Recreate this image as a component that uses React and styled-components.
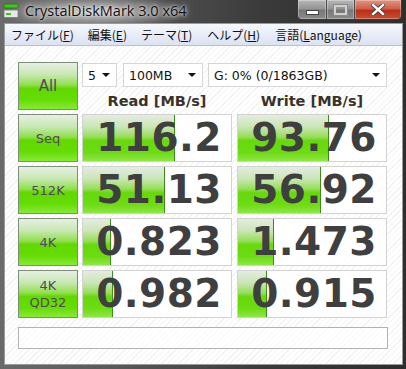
import React from "react"
import styled, { createGlobalStyle } from "styled-components"

const GlobalStyle = createGlobalStyle`
  html, body {
    margin: 0;
    padding: 0;
    background: #2e2e2e;
  }
  body {
    font-family: "DejaVu Sans", "Liberation Sans", sans-serif;
  }
`

const Window = styled.div`
  width: 406px;
  height: 369px;
  box-sizing: border-box;
  display: flex;
  flex-direction: column;
  background: linear-gradient(90deg, #6a6a6a 0%, #585858 30%, #3a3a3a 65%, #2e2e2e 100%);
  padding: 0 3px 4px 4px;
`

const TitleBar = styled.div`
  height: 23px;
  display: flex;
  align-items: flex-start;
  margin-left: -4px;
  margin-right: -3px;
  padding-left: 3px;
  background: radial-gradient(ellipse 95px 18px at 95px 12px, rgba(230, 230, 230, 0.75), rgba(180, 180, 180, 0) 100%);
`

const AppIcon = styled.svg`
  width: 16px;
  height: 16px;
  margin-top: 3px;
  flex: none;
`

const Title = styled.div`
  margin-left: 6px;
  margin-top: 1px;
  font-family: "Open Sans", "Noto Sans", sans-serif;
  font-size: 14.5px;
  line-height: 20px;
  color: #101010;
  text-shadow: 0 0 6px rgba(255, 255, 255, 0.9), 0 0 3px rgba(255, 255, 255, 0.8);
  flex: 1;
`

const Controls = styled.div`
  display: flex;
  height: 19px;
  margin-right: 4px;
  border: 1px solid #3a3a3a;
  border-top: none;
  border-radius: 0 0 5px 5px;
  overflow: hidden;
`

const CtrlButton = styled.div`
  width: ${(p) => p.$w}px;
  height: 100%;
  display: flex;
  align-items: center;
  justify-content: center;
  border-left: ${(p) => (p.$first ? "none" : "1px solid #4a4a4a")};
  background: ${(p) =>
    p.$close
      ? "linear-gradient(180deg, #e09484 0%, #d0604a 45%, #b8301a 55%, #c85030 100%)"
      : "linear-gradient(180deg, #b8b8b8 0%, #959595 45%, #777 55%, #8c8c8c 100%)"};
  box-shadow: inset 0 0 0 1px rgba(255, 255, 255, 0.3);
`

const MinGlyph = styled.div`
  width: 11px;
  height: 3px;
  margin-top: 6px;
  background: #fff;
  border: 1px solid #444;
`

const MaxGlyph = styled.div`
  width: 9px;
  height: 6px;
  border: 2px solid #d0d0d0;
  outline: 1px solid #8a8a8a;
`

const Client = styled.div`
  flex: 1;
  display: flex;
  flex-direction: column;
  background: #fff;
  border: 1px solid #9a9a9a;
`

const MenuBar = styled.div`
  height: 21px;
  display: flex;
  align-items: center;
  gap: 0;
  padding-left: 6px;
  background: linear-gradient(180deg, #f6f8fc 0%, #e8edf7 50%, #dbe2f1 100%);
  border-bottom: 1px solid #b8c0d4;
`

const MenuItem = styled.div`
  font-family: "Noto Sans CJK JP", sans-serif;
  font-size: 12px;
  line-height: 20px;
  color: #111;
  margin-right: ${(p) => p.$mr}px;
  u {
    text-decoration: underline;
    text-underline-offset: 1px;
  }
`

const Body = styled.div`
  flex: 1;
  background: repeating-linear-gradient(135deg, #ffffff 0 3px, #f2f2f2 3px 4px);
  padding: 16px 0 0 13px;
  display: grid;
  grid-template-columns: 60px 150px 151px;
  grid-template-rows: repeat(5, 48px) 27px;
  column-gap: 4px;
  row-gap: 4px;
  align-content: start;
`

const GreenButton = styled.div`
  box-sizing: border-box;
  border: 1px solid #7e8c7a;
  display: flex;
  flex-direction: column;
  align-items: center;
  justify-content: center;
  background: linear-gradient(180deg, #e6f0e2 0%, #c8e8b4 25%, #8fe04c 48%, #62d800 55%, #66dc06 80%, #86ea36 100%);
  color: #544662;
  font-family: ${(p) => (p.$comic ? '"DejaVu Sans", sans-serif' : '"DejaVu Sans", sans-serif')};
  font-size: ${(p) => p.$size || 13}px;
  line-height: 17px;
`

const TopPanel = styled.div`
  grid-column: 2 / 4;
  display: grid;
  grid-template-columns: 150px 151px;
  grid-template-rows: 25px 1fr;
  column-gap: 4px;
`

const SelectRow = styled.div`
  grid-column: 1 / 3;
  display: flex;
  gap: 6px;
  padding-top: 1px;
`

const Select = styled.div`
  box-sizing: border-box;
  width: ${(p) => p.$w}px;
  height: 24px;
  margin-left: ${(p) => p.$ml || 0}px;
  border: 1px solid #d6d6d6;
  background: #fff;
  display: flex;
  align-items: center;
  padding: 0 6px 0 5px;
  font-family: "DejaVu Sans", sans-serif;
  font-size: 12.5px;
  color: #111;
  span {
    flex: 1;
  }
`

const Arrow = styled.div`
  width: 0;
  height: 0;
  border-left: 4px solid transparent;
  border-right: 4px solid transparent;
  border-top: 4px solid #111;
`

const Header = styled.div`
  display: flex;
  align-items: flex-end;
  justify-content: center;
  font-family: "DejaVu Sans", sans-serif;
  font-weight: bold;
  font-size: 14.5px;
  color: #3a3228;
  padding-bottom: 1px;
  justify-self: ${(p) => (p.$right ? "end" : "stretch")};
  width: 150px;
`

const ResultBox = styled.div`
  position: relative;
  box-sizing: border-box;
  width: 150px;
  justify-self: ${(p) => (p.$right ? "end" : "start")};
  border: 1px solid #d2d2d2;
  background: rgba(255, 255, 255, 0.85);
  display: flex;
  align-items: center;
  justify-content: flex-end;
  padding-right: 9px;
  overflow: hidden;
`

const Bar = styled.div`
  position: absolute;
  left: 0;
  top: 0;
  bottom: 0;
  border-right: 1px solid #3c8c1c;
  background: linear-gradient(180deg, #e4ece0 0%, #cbe6b8 25%, #96de58 48%, #66d80a 56%, #6ddc14 82%, #8ee644 100%);
`

const Value = styled.div`
  position: relative;
  font-family: "DejaVu Sans", "Liberation Sans", sans-serif;
  font-weight: bold;
  font-size: 39px;
  letter-spacing: 0.5px;
  line-height: 46px;
  color: #3f3f3f;
`

const StatusBar = styled.div`
  grid-column: 1 / 4;
  margin-top: 5px;
  width: 370px;
  box-sizing: border-box;
  border: 1px solid #b2b2b2;
  background: rgba(255, 255, 255, 0.6);
`

const rows = [
  { label: "Seq", comic: true, read: "116.2", readBar: 91, write: "93.76", writeBar: 90 },
  { label: "512K", read: "51.13", readBar: 81, write: "56.92", writeBar: 82 },
  { label: "4K", read: "0.823", readBar: 27, write: "1.473", writeBar: 35 },
  { label: "4K\nQD32", read: "0.982", readBar: 29, write: "0.915", writeBar: 28 },
]

function DriveIcon() {
  return (
    <AppIcon viewBox="0 0 16 16">
      <rect x="1" y="1" width="14" height="4" rx="1" fill="#3cc81c" stroke="#1e7a10" strokeWidth="0.8" />
      <rect x="1" y="7" width="14" height="7.5" rx="1" fill="#e8e8e8" stroke="#7a7a7a" strokeWidth="0.8" />
      <rect x="3" y="10" width="5" height="2" fill="#3cc81c" />
    </AppIcon>
  )
}

function Result({ value, bar, right }) {
  return (
    <ResultBox $right={right}>
      <Bar style={{ width: bar }} />
      <Value>{value}</Value>
    </ResultBox>
  )
}

export default function App() {
  return (
    <>
      <GlobalStyle />
      <Window>
        <TitleBar>
          <DriveIcon />
          <Title>CrystalDiskMark 3.0 x64</Title>
          <Controls>
            <CtrlButton $w={28} $first>
              <MinGlyph />
            </CtrlButton>
            <CtrlButton $w={27}>
              <MaxGlyph />
            </CtrlButton>
            <CtrlButton $w={46} $close>
              <svg width="14" height="11" viewBox="0 0 14 11">
                <path d="M2 1 L12 10 M12 1 L2 10" stroke="#3a3a3a" strokeWidth="4" strokeLinecap="square" />
                <path d="M2 1 L12 10 M12 1 L2 10" stroke="#fff" strokeWidth="2.4" strokeLinecap="square" />
              </svg>
            </CtrlButton>
          </Controls>
        </TitleBar>
        <Client>
          <MenuBar>
            <MenuItem $mr={14}>ファイル(<u>F</u>)</MenuItem>
            <MenuItem $mr={14}>編集(<u>E</u>)</MenuItem>
            <MenuItem $mr={15}>テーマ(<u>T</u>)</MenuItem>
            <MenuItem $mr={15}>ヘルプ(<u>H</u>)</MenuItem>
            <MenuItem>言語(<u>L</u>anguage)</MenuItem>
          </MenuBar>
          <Body>
            <GreenButton $size={15}>All</GreenButton>
            <TopPanel>
              <SelectRow>
                <Select $w={35}>
                  <span>5</span>
                  <Arrow />
                </Select>
                <Select $w={80}>
                  <span>100MB</span>
                  <Arrow />
                </Select>
                <Select $w={179} $ml={-1}>
                  <span>G: 0% (0/1863GB)</span>
                  <Arrow />
                </Select>
              </SelectRow>
              <Header>Read [MB/s]</Header>
              <Header $right>Write [MB/s]</Header>
            </TopPanel>
            {rows.map((r) => (
              <React.Fragment key={r.label}>
                <GreenButton $comic={r.comic}>
                  {r.label.split("\n").map((t) => (
                    <div key={t}>{t}</div>
                  ))}
                </GreenButton>
                <Result value={r.read} bar={r.readBar} />
                <Result value={r.write} bar={r.writeBar} right />
              </React.Fragment>
            ))}
            <StatusBar />
          </Body>
        </Client>
      </Window>
    </>
  )
}
